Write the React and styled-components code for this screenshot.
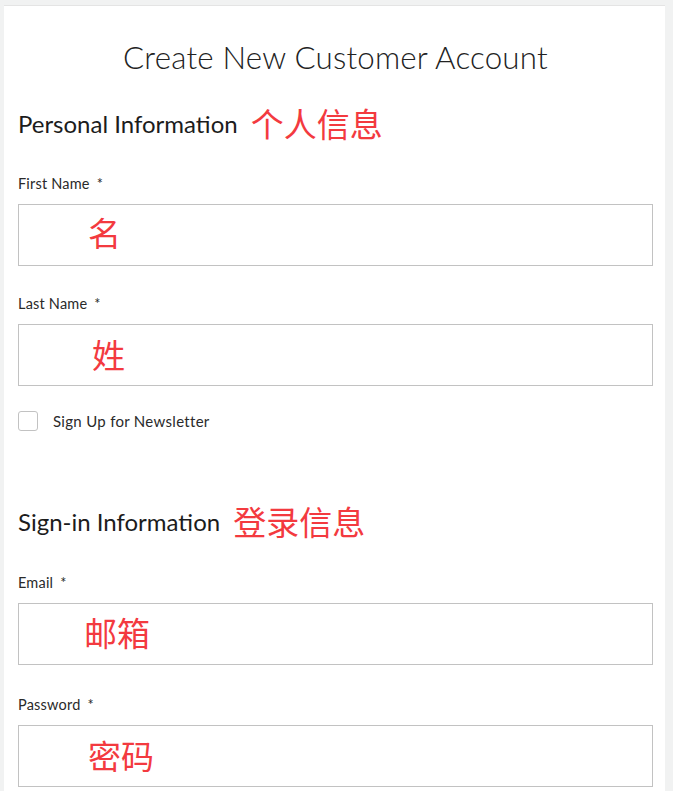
import React from "react";
import styled, { createGlobalStyle } from "styled-components";

const Global = createGlobalStyle`
  html, body { margin: 0; padding: 0; }
  body {
    background: #f1f2f2;
    font-family: Lato, "Noto Sans", "Noto Sans CJK SC", sans-serif;
    color: #1c1c1c;
  }
`;

const Card = styled.div`
  margin: 5px 8px 0 4px;
  background: #fff;
  border-top: 1px solid #e4e4e4;
  padding: 0 12px 4px 14px;
  min-height: 786px;
  box-sizing: border-box;
`;

const Title = styled.h1`
  margin: 0;
  padding-top: 33px;
  height: 70px;
  box-sizing: border-box;
  text-align: center;
  font-weight: 300;
  font-size: 31.3px;
  line-height: 36px;
  color: #222;
  letter-spacing: 0.2px;
`;

const SectionHead = styled.h2`
  display: flex;
  align-items: center;
  gap: 13px;
  margin: ${(p) => p.$top}px 0 0;
  height: 40px;
  font-weight: 400;
  font-size: 24px;
  color: #1c1c1c;
`;

const Note = styled.span`
  font-family: "Noto Sans CJK SC", sans-serif;
  color: #f33a3f;
  font-size: 33px;
  line-height: 1;
  font-weight: 400;
  padding-left: ${(p) => p.$indent || 0}px;
`;

const Field = styled.div`
  display: flex;
  flex-direction: column;
  margin-top: ${(p) => p.$top}px;
`;

const Label = styled.label`
  font-size: 14.5px;
  line-height: 18px;
  color: #2a2a2a;
  margin-bottom: 11px;
  letter-spacing: 0.2px;
`;

const Star = styled.span`
  margin-left: 7px;
`;

const InputBox = styled.div`
  height: 62px;
  box-sizing: border-box;
  border: 1px solid #c2c2c2;
  display: flex;
  align-items: center;
  padding-bottom: ${(p) => p.$lift}px;
`;

const CheckRow = styled.div`
  display: flex;
  align-items: center;
  gap: 15px;
  margin-top: 25px;
  font-size: 15px;
  color: #2a2a2a;
  letter-spacing: 0.3px;
`;

const Box = styled.span`
  width: 20px;
  height: 20px;
  box-sizing: border-box;
  border: 1px solid #c2c2c2;
  border-radius: 3px;
  background: #fff;
`;

const fields1 = [
  { label: "First Name", note: "名", indent: 69, top: 32, lift: 5 },
  { label: "Last Name", note: "姓", indent: 73, top: 29, lift: 2 },
];
const fields2 = [
  { label: "Email", note: "邮箱", indent: 65, top: 33, lift: 3 },
  { label: "Password", note: "密码", indent: 69, top: 31, lift: 1 },
];

function Fields({ list }) {
  return list.map((f) => (
    <Field key={f.label} $top={f.top}>
      <Label>
        {f.label}
        <Star>*</Star>
      </Label>
      <InputBox $lift={f.lift}>
        <Note $indent={f.indent}>{f.note}</Note>
      </InputBox>
    </Field>
  ));
}

export default function App() {
  return (
    <>
      <Global />
      <Card>
        <Title>Create New Customer Account</Title>
        <SectionHead $top={27}>
          Personal Information <Note>个人信息</Note>
        </SectionHead>
        <Fields list={fields1} />
        <CheckRow>
          <Box />
          Sign Up for Newsletter
        </CheckRow>
        <SectionHead $top={70}>
          Sign-in Information <Note>登录信息</Note>
        </SectionHead>
        <Fields list={fields2} />
      </Card>
    </>
  );
}
